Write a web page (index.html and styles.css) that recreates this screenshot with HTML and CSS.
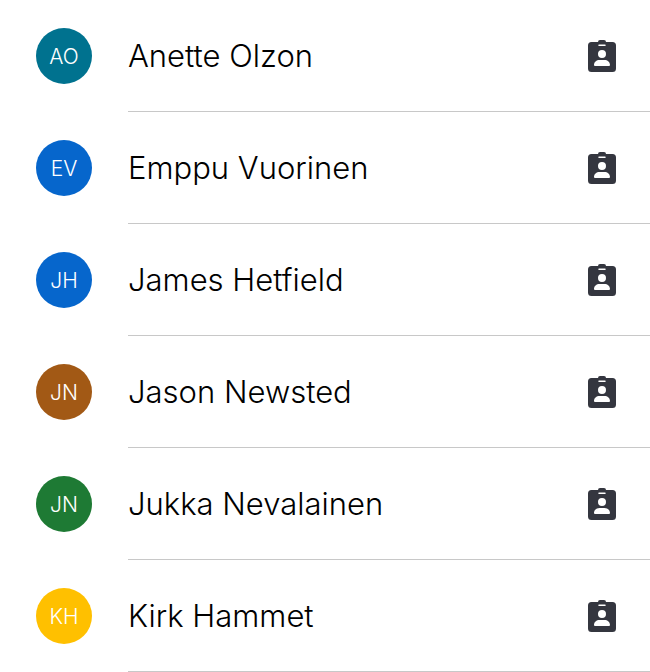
FILE: index.html
```html
<!DOCTYPE html>
<html lang="en">
<head>
<meta charset="utf-8">
<meta name="viewport" content="width=device-width, initial-scale=1">
<title>Contacts</title>
<link rel="stylesheet" href="styles.css">
</head>
<body>
<svg class="sprite" aria-hidden="true">
  <symbol id="badge" viewBox="0 0 28 32">
    <path fill="currentColor" fill-rule="evenodd" d="M10 2a2 2 0 0 1 2-2h4a2 2 0 0 1 2 2h6.500a3.500 3.500 0 0 1 3.500 3.500v23a3.500 3.500 0 0 1-3.500 3.500h-21A3.500 3.500 0 0 1 0 28.500v-23A3.500 3.500 0 0 1 3.500 2zM11 4.500a.75.75 0 0 0 0 1.500h6a.75.75 0 0 0 0-1.500zM14 10a4 4 0 1 0 0 8a4 4 0 1 0 0-8zM7 26h14a1 1 0 0 0 1-1c0-3-2.500-5-5.500-5h-5C8.500 20 6 22 6 25a1 1 0 0 0 1 1z"/>
  </symbol>
</svg>
<ul class="contacts">
  <li class="contact"><span class="avatar teal">AO</span><div class="details"><span class="name">Anette Olzon</span><button class="card" aria-label="View Anette Olzon"><svg class="icon"><use href="#badge"/></svg></button></div></li>
  <li class="contact"><span class="avatar blue">EV</span><div class="details"><span class="name">Emppu Vuorinen</span><button class="card" aria-label="View Emppu Vuorinen"><svg class="icon"><use href="#badge"/></svg></button></div></li>
  <li class="contact"><span class="avatar blue">JH</span><div class="details"><span class="name">James Hetfield</span><button class="card" aria-label="View James Hetfield"><svg class="icon"><use href="#badge"/></svg></button></div></li>
  <li class="contact"><span class="avatar brown">JN</span><div class="details"><span class="name">Jason Newsted</span><button class="card" aria-label="View Jason Newsted"><svg class="icon"><use href="#badge"/></svg></button></div></li>
  <li class="contact"><span class="avatar green">JN</span><div class="details"><span class="name">Jukka Nevalainen</span><button class="card" aria-label="View Jukka Nevalainen"><svg class="icon"><use href="#badge"/></svg></button></div></li>
  <li class="contact"><span class="avatar yellow">KH</span><div class="details"><span class="name">Kirk Hammet</span><button class="card" aria-label="View Kirk Hammet"><svg class="icon"><use href="#badge"/></svg></button></div></li>
</ul>
</body>
</html>
```
FILE: styles.css
```css
* { box-sizing: border-box; }
body {
  margin: 0;
  background: #fff;
  color: #000;
  font-family: Inter, "Liberation Sans", sans-serif;
}
.sprite { display: none; }
.contacts { margin: 0; padding: 0; list-style: none; }
.contact {
  display: flex;
  align-items: center;
  gap: 36px;
  padding-left: 36px;
}
.avatar {
  flex: none;
  display: flex;
  align-items: center;
  justify-content: center;
  width: 56px;
  height: 56px;
  border-radius: 50%;
  color: #fff;
  font-size: 21px;
  font-weight: 300;
}
.teal { background: #00728f; }
.blue { background: #0666cc; }
.brown { background: #a25915; }
.green { background: #1e7a34; }
.yellow { background: #ffc000; }
.details {
  flex: 1;
  display: flex;
  align-items: center;
  justify-content: space-between;
  height: 112px;
  padding-right: 34px;
  border-bottom: 1px solid #c8c8c8;
}
.name {
  font-size: 31px;
  font-weight: 300;
  line-height: 40px;
}
.card {
  display: flex;
  padding: 0;
  border: 0;
  background: none;
  color: #34363f;
}
.icon { width: 28px; height: 32px; }
```
